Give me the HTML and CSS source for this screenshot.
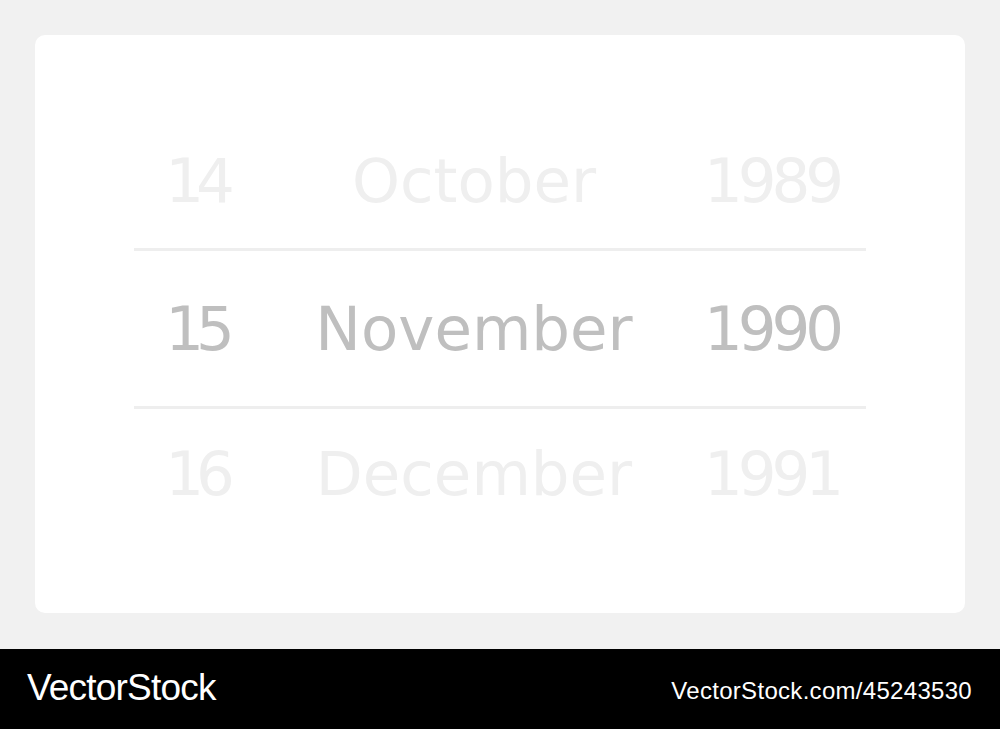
FILE: index.html
```html
<!DOCTYPE html>
<html lang="en">
<head>
<meta charset="utf-8">
<title>Date picker</title>
<link rel="stylesheet" href="styles.css">
</head>
<body>
<main class="stage">
  <section class="card">
    <div class="picker">
      <div class="row row-prev">
        <span class="cell day">14</span>
        <span class="cell month">October</span>
        <span class="cell year">1989</span>
      </div>
      <div class="row row-current">
        <span class="cell day">15</span>
        <span class="cell month">November</span>
        <span class="cell year">1990</span>
      </div>
      <div class="row row-next">
        <span class="cell day">16</span>
        <span class="cell month">December</span>
        <span class="cell year">1991</span>
      </div>
    </div>
  </section>
</main>
<footer class="footer">
  <span class="brand">VectorStock</span>
  <span class="ref">VectorStock.com/45243530</span>
</footer>
</body>
</html>
```
FILE: styles.css
```css
* { box-sizing: border-box; }

html, body {
  margin: 0;
  padding: 0;
}

body {
  width: 1000px;
  height: 729px;
  background: #f1f1f1;
  display: flex;
  flex-direction: column;
  overflow: hidden;
}

.stage {
  flex: 1;
  padding: 35px 35px 36px;
}

.card {
  height: 578px;
  background: #ffffff;
  border-radius: 10px;
  padding: 77px 99px 0;
}

.picker {
  width: 732px;
  display: flex;
  flex-direction: column;
  font-family: "DejaVu Sans", sans-serif;
  font-size: 61px;
  line-height: 1;
}

.row {
  display: grid;
  grid-template-columns: 132px 416px 184px;
  align-items: center;
  color: #efefef;
}

.row-prev { height: 136px; }

.row-current {
  height: 161px;
  border-top: 3px solid #eeeeee;
  border-bottom: 3px solid #eeeeee;
  color: #bfbfbf;
}

.row-next { height: 128px; }

.cell {
  text-align: center;
  white-space: nowrap;
}

/* digits sit tighter than the month names */
.day {
  letter-spacing: -8px;
  padding-right: 8px;
}

.year {
  letter-spacing: -5px;
  padding-right: 5px;
}

.footer {
  height: 80px;
  background: #000000;
  color: #ffffff;
  display: flex;
  align-items: center;
  justify-content: space-between;
  padding: 0 28px 0 27px;
  font-family: "Liberation Sans", Arial, sans-serif;
}

.brand {
  font-size: 37px;
  letter-spacing: -0.8px;
  margin-top: -2px;
}

.ref {
  font-size: 24px;
  letter-spacing: 0.3px;
  margin-top: 4px;
}
```
